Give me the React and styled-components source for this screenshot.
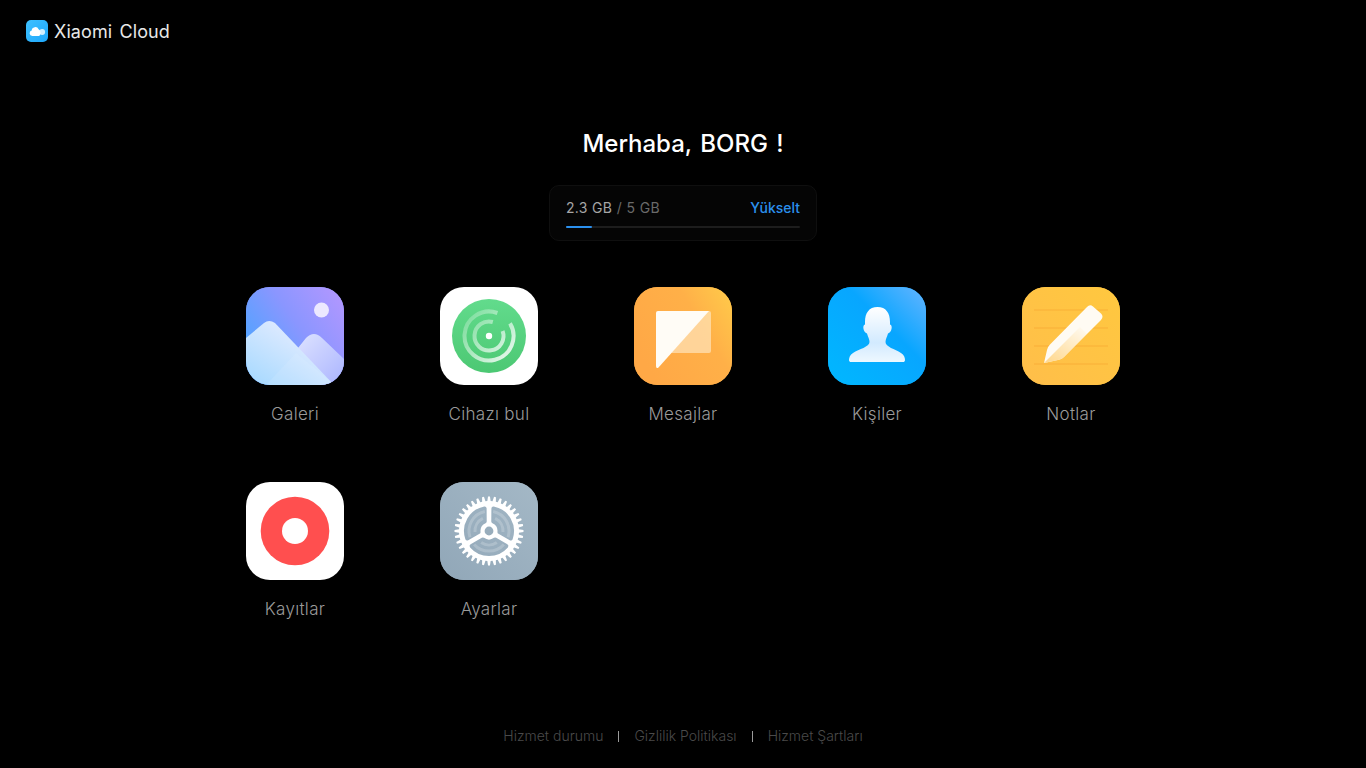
import styled, { createGlobalStyle } from "styled-components";

const GlobalStyle = createGlobalStyle`
  html, body { margin: 0; padding: 0; background: #000; }
  body { font-family: Inter, "Noto Sans", "Liberation Sans", sans-serif; }
`;

const Page = styled.div`
  height: 768px;
  display: flex;
  flex-direction: column;
  align-items: center;
  overflow: hidden;
  background: #000;
`;

const Header = styled.header`
  align-self: stretch;
  height: 62px;
  padding-left: 26px;
  display: flex;
  align-items: center;
  gap: 6px;
`;

const BrandName = styled.span`
  padding-top: 1px;
  color: #e8e8e8;
  font-size: 18px;
  line-height: 22px;
  letter-spacing: 0.1px;
  word-spacing: 2px;
`;

const Title = styled.h1`
  margin: 65px 0 0;
  color: #fff;
  font-size: 24px;
  line-height: 34px;
  font-weight: 500;
  word-spacing: 2px;
`;

const StorageCard = styled.section`
  box-sizing: border-box;
  width: 268px;
  height: 56px;
  margin-top: 24px;
  padding: 11px 16px 0;
  background: #050505;
  border: 1px solid #0f0f0f;
  border-radius: 10px;
`;

const StorageRow = styled.div`
  display: flex;
  justify-content: space-between;
  align-items: center;
  height: 20px;
  font-size: 14px;
  color: #6a6a6a;
`;

const Usage = styled.span`
  letter-spacing: 0.25px;
  word-spacing: 0.3px;
`;

const Used = styled.span`
  color: #a6a6a6;
`;

const Upgrade = styled.a`
  color: #2b90ee;
  font-weight: 500;
`;

const Track = styled.div`
  height: 2px;
  margin-top: 9px;
  background: #1d1d1d;
  border-radius: 1px;
`;

const Fill = styled.div`
  height: 100%;
  background: #2b90ee;
  border-radius: 1px;
`;

const AppGrid = styled.div`
  width: 970px;
  margin-top: 46px;
  display: grid;
  grid-template-columns: repeat(5, 194px);
  grid-auto-rows: 195px;
`;

const AppTile = styled.a`
  display: flex;
  flex-direction: column;
  align-items: center;
`;

const IconBox = styled.div`
  width: 98px;
  height: 98px;
  border-radius: 24px;
  overflow: hidden;
  background: ${(p) => p.$bg};
  svg { display: block; }
`;

const AppLabel = styled.span`
  margin-top: 18px;
  color: #9a9a9a;
  font-size: 17px;
  line-height: 22px;
  font-weight: 300;
  letter-spacing: 0.3px;
`;

const Footer = styled.footer`
  margin-top: auto;
  height: 42px;
  display: flex;
  align-items: flex-start;
  gap: 14px;
  font-size: 14px;
  line-height: 20px;
  font-weight: 300;
  color: #4a4a4a;
`;

const Divider = styled.i`
  width: 1px;
  height: 11px;
  margin: 5px 1px 0;
  background: #9a9a9a;
`;

const LogoIcon = () => (
  <svg width="22" height="22" viewBox="0 0 22 22">
    <defs>
      <linearGradient id="logo" x1="0" y1="0" x2="1" y2="1">
        <stop offset="0" stopColor="#3ec1ff" />
        <stop offset="1" stopColor="#1ea7fb" />
      </linearGradient>
    </defs>
    <rect width="22" height="22" rx="5" fill="url(#logo)" />
    <circle cx="16.2" cy="12" r="2.9" fill="#cfeeff" />
    <path d="M6.3 16a2.8 2.8 0 0 1-.6-5.5 3.6 3.6 0 0 1 6.9-1.2 3.3 3.3 0 0 1 1.9 3 3.7 3.7 0 0 1-1.2 3.7z" fill="#fff" />
  </svg>
);

const GalleryIcon = () => (
  <svg width="98" height="98" viewBox="0 0 98 98">
    <defs>
      <linearGradient id="galBg" x1="0" y1="0.7" x2="1" y2="0">
        <stop offset="0" stopColor="#4aa5ff" />
        <stop offset="0.5" stopColor="#8a96ff" />
        <stop offset="1" stopColor="#b697ff" />
      </linearGradient>
      <linearGradient id="galA" x1="0" y1="1" x2="0.8" y2="0.1">
        <stop offset="0" stopColor="#a3d8ff" />
        <stop offset="1" stopColor="#ebeeff" />
      </linearGradient>
      <linearGradient id="galB" x1="0" y1="0" x2="1" y2="1">
        <stop offset="0" stopColor="#dfe4ff" />
        <stop offset="1" stopColor="#aab4ff" />
      </linearGradient>
    </defs>
    <rect width="98" height="98" fill="url(#galBg)" />
    <circle cx="75.5" cy="23" r="7.5" fill="#ece8ff" />
    <path d="M48 98 V66 L60 51 Q68 43 76 51 L98 72 V98z" fill="url(#galB)" />
    <path d="M0 51 L18 36 Q23 32 29 36 L88 98 H0z" fill="url(#galA)" />
    <path d="M20 98 L50 66 L82 92 L88 98z" fill="#f1f3ff" opacity="0.12" />
  </svg>
);

const FindDeviceIcon = () => (
  <svg width="98" height="98" viewBox="0 0 98 98">
    <defs>
      <linearGradient id="findBg" x1="0" y1="0" x2="0" y2="1">
        <stop offset="0" stopColor="#62db8c" />
        <stop offset="1" stopColor="#4cc873" />
      </linearGradient>
      <linearGradient id="findArc" gradientUnits="userSpaceOnUse" x1="28" y1="28" x2="70" y2="70">
        <stop offset="0" stopColor="#fff" stopOpacity="0.22" />
        <stop offset="1" stopColor="#fff" stopOpacity="0.85" />
      </linearGradient>
    </defs>
    <circle cx="49" cy="49" r="37" fill="url(#findBg)" />
    <path d="M70 36.4 A24.5 24.5 0 1 1 57.4 26" fill="none" stroke="url(#findArc)" strokeWidth="4" />
    <path d="M62.6 44 A14.5 14.5 0 1 1 52.8 35" fill="none" stroke="url(#findArc)" strokeWidth="4" />
    <circle cx="49" cy="49" r="3.2" fill="#fff" />
  </svg>
);

const MessagesIcon = () => (
  <svg width="98" height="98" viewBox="0 0 98 98">
    <defs>
      <linearGradient id="msgBg" x1="0" y1="0.6" x2="1" y2="0">
        <stop offset="0" stopColor="#ffa846" />
        <stop offset="0.6" stopColor="#ffb048" />
        <stop offset="1" stopColor="#ffcc4a" />
      </linearGradient>
    </defs>
    <rect width="98" height="98" fill="url(#msgBg)" />
    <path d="M74 24 H75a2 2 0 0 1 2 2 V64a2 2 0 0 1-2 2 H37z" fill="#ffeccc" opacity="0.62" />
    <path d="M24 24 H75 L24.5 80.5 Q22 82 22 79 V26a2 2 0 0 1 2-2z" fill="#fffcf6" />
  </svg>
);

const ContactsIcon = () => (
  <svg width="98" height="98" viewBox="0 0 98 98">
    <defs>
      <linearGradient id="conBg" x1="0" y1="1" x2="1" y2="0">
        <stop offset="0" stopColor="#00b8ff" />
        <stop offset="0.6" stopColor="#08a6ff" />
        <stop offset="1" stopColor="#66b4ff" />
      </linearGradient>
      <linearGradient id="conFg" x1="0" y1="0" x2="0" y2="1">
        <stop offset="0" stopColor="#fff" />
        <stop offset="0.65" stopColor="#d2eaff" />
        <stop offset="1" stopColor="#eef8ff" />
      </linearGradient>
    </defs>
    <rect width="98" height="98" fill="url(#conBg)" />
    <path
      d="M49.5 20 C58 20 62 26 62 35 L62 37.5 C63.5 37.5 64 40 63.5 42 C63 44 62 46 60 46.5 C59 50 57.5 52 57.5 55 C57.5 60 67 62 73 66 C76 68 77 70.5 77 73 C77 74.5 76 75 75 75 H23 C22 75 21 74.5 21 73 C21 70.5 22 68 25 66 C31 62 41.5 60 41.5 55 C41.5 52 40 50 39 46.5 C37 46 36 44 35.5 42 C35 40 35.5 37.5 37 37.5 L37 35 C37 26 41 20 49.5 20z"
      fill="url(#conFg)"
    />
  </svg>
);

const NotesIcon = () => (
  <svg width="98" height="98" viewBox="0 0 98 98">
    <defs>
      <linearGradient id="noteBg" x1="0" y1="1" x2="1" y2="0">
        <stop offset="0" stopColor="#ffbe4a" />
        <stop offset="1" stopColor="#ffc83f" />
      </linearGradient>
      <linearGradient id="noteShade" x1="1" y1="0" x2="0.2" y2="1">
        <stop offset="0" stopColor="#ffd88e" stopOpacity="0" />
        <stop offset="1" stopColor="#ffd88e" stopOpacity="0.95" />
      </linearGradient>
    </defs>
    <rect width="98" height="98" fill="url(#noteBg)" />
    {[22.5, 40.5, 58.5, 76.5].map((y) => (
      <rect key={y} x="12" y={y} width="74" height="1" fill="#f5a32e" opacity="0.6" />
    ))}
    <path
      d="M22 76 L25 63 Q25.5 60 28 57.5 L65 20 Q68 17 71 19.5 L79 26.5 Q82 29.5 79 33 L42 70 Q40 72 37 72.8z"
      fill="#fffbf3"
    />
    <path d="M22 76 L58 40 L65 47 L42 70 Q40 72 37 72.8z" fill="url(#noteShade)" />
  </svg>
);

const RecorderIcon = () => (
  <svg width="98" height="98" viewBox="0 0 98 98">
    <circle cx="49" cy="49" r="34.3" fill="#ff4f4f" />
    <circle cx="49" cy="49" r="13" fill="#fff" />
  </svg>
);

const polar = (deg, r) => {
  const a = (deg * Math.PI) / 180;
  return `${(49 + r * Math.cos(a)).toFixed(2)} ${(49 + r * Math.sin(a)).toFixed(2)}`;
};

// teeth of the settings gear, computed instead of typing 36 points
const gearPath = () => {
  const step = 10;
  const points = [];
  for (let a = 0; a < 360; a += step) {
    points.push(polar(a - step * 0.32, 30), polar(a - step * 0.16, 34.5), polar(a + step * 0.16, 34.5), polar(a + step * 0.32, 30));
  }
  return `M${points.join("L")}z`;
};

// window between two spokes, rounded off by its stroke
const sectorPath = (from, to) =>
  `M${polar(from + 11, 23)} A23 23 0 0 1 ${polar(to - 11, 23)} L${polar(to - 24, 10.5)} A10.5 10.5 0 0 0 ${polar(from + 24, 10.5)}z`;

const arcPath = (from, to, r) => `M${polar(from, r)} A${r} ${r} 0 0 1 ${polar(to, r)}`;

const SettingsIcon = () => (
  <svg width="98" height="98" viewBox="0 0 98 98">
    <defs>
      <linearGradient id="setBg" gradientUnits="userSpaceOnUse" x1="0" y1="98" x2="98" y2="0">
        <stop offset="0" stopColor="#91a7b8" />
        <stop offset="1" stopColor="#a4b8c6" />
      </linearGradient>
    </defs>
    <rect width="98" height="98" fill="url(#setBg)" />
    <path d={gearPath()} fill="#fff" />
    {[-90, 30, 150].map((from) => (
      <g key={from}>
        <path
          d={sectorPath(from, from + 120)}
          fill="url(#setBg)"
          stroke="url(#setBg)"
          strokeWidth="4"
          strokeLinejoin="round"
        />
        <path d={arcPath(from + 12, from + 108, 20)} fill="none" stroke="#fff" strokeWidth="3" opacity="0.2" />
        <path d={arcPath(from + 26, from + 94, 14)} fill="none" stroke="#fff" strokeWidth="3" opacity="0.2" />
      </g>
    ))}
    <circle cx="49" cy="49" r="6" fill="#98adbc" stroke="#fff" strokeWidth="3.2" />
  </svg>
);

const apps = [
  { label: "Galeri", Icon: GalleryIcon, bg: "#8a96ff" },
  { label: "Cihazı bul", Icon: FindDeviceIcon, bg: "#fff" },
  { label: "Mesajlar", Icon: MessagesIcon, bg: "#ffb048" },
  { label: "Kişiler", Icon: ContactsIcon, bg: "#08a6ff" },
  { label: "Notlar", Icon: NotesIcon, bg: "#ffc445" },
  { label: "Kayıtlar", Icon: RecorderIcon, bg: "#fff" },
  { label: "Ayarlar", Icon: SettingsIcon, bg: "#98adbc" },
];

const usedPercent = 11;

const App = () => (
  <>
    <GlobalStyle />
    <Page>
      <Header>
        <LogoIcon />
        <BrandName>Xiaomi Cloud</BrandName>
      </Header>

      <Title>Merhaba, BORG !</Title>

      <StorageCard>
        <StorageRow>
          <Usage>
            <Used>2.3 GB</Used> / 5 GB
          </Usage>
          <Upgrade>Yükselt</Upgrade>
        </StorageRow>
        <Track>
          <Fill style={{ width: `${usedPercent}%` }} />
        </Track>
      </StorageCard>

      <AppGrid>
        {apps.map(({ label, Icon, bg }) => (
          <AppTile key={label}>
            <IconBox $bg={bg}>
              <Icon />
            </IconBox>
            <AppLabel>{label}</AppLabel>
          </AppTile>
        ))}
      </AppGrid>

      <Footer>
        <span>Hizmet durumu</span>
        <Divider />
        <span>Gizlilik Politikası</span>
        <Divider />
        <span>Hizmet Şartları</span>
      </Footer>
    </Page>
  </>
);

export default App;
